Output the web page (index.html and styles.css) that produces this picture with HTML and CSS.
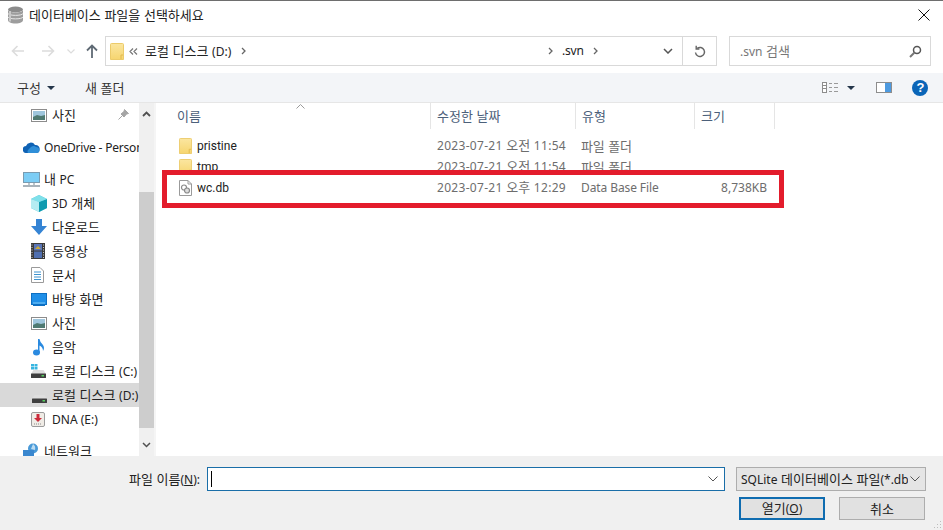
FILE: index.html
```html
<!DOCTYPE html>
<html lang="ko">
<head>
<meta charset="utf-8">
<title>데이터베이스 파일을 선택하세요</title>
<link rel="stylesheet" href="styles.css">
</head>
<body>
<svg class="defs" width="0" height="0" aria-hidden="true">
  <defs>
    <linearGradient id="fg" x1="0" y1="0" x2="0" y2="1"><stop offset="0" stop-color="#fbe6a0"/><stop offset="1" stop-color="#f6d56f"/></linearGradient>
    <symbol id="folder" viewBox="0 0 14 17" preserveAspectRatio="none">
      <path d="M0.500 1.500 Q0.500 0.500 1.500 0.500 H12.500 Q13.500 0.500 13.500 1.500 V16.500 H0.500 Z" fill="url(#fg)" stroke="#eccb6a"/>
      <path d="M11 16 V12 H13" fill="none" stroke="#e2b94e"/>
    </symbol>
    <symbol id="photo" viewBox="0 0 16 13">
      <rect x="0.500" y="0.500" width="15" height="12" fill="#fff" stroke="#8c8c8c"/>
      <rect x="2" y="2" width="12" height="9" fill="#9fc6dd"/>
      <path d="M2 8 L6 6 L10 7 L14 6 V11 H2 Z" fill="#4f7a72"/>
    </symbol>
    <symbol id="drive" viewBox="0 0 15 8">
      <path d="M2.500 0 H12.500 L15 4 H0 Z" fill="#dedede"/>
      <rect x="0" y="3.500" width="15" height="4.500" rx="0.500" fill="#3f3f3f"/>
      <rect x="10.500" y="5" width="2.500" height="1.500" fill="#57d060"/>
    </symbol>
  </defs>
</svg>
<main class="window">
  <header class="titlebar">
    <svg class="title-icon" width="17" height="18" viewBox="0 0 17 18"><ellipse cx="8.500" cy="3.500" rx="7.500" ry="3" fill="#8c8c8c"/><path d="M1 3.500 V14 C1 16 4 17.500 8.500 17.500 S16 16 16 14 V3.500 C16 5.500 13 6.500 8.500 6.500 S1 5.500 1 3.500Z" fill="#9d9d9d"/><path d="M1 7.500 C2 10 15 10 16 7.500 M1 11 C2 13.500 15 13.500 16 11" fill="none" stroke="#e6e6e6"/><path d="M3 5 V15.500" stroke="#c9c9c9" stroke-width="2"/></svg>
    <span class="title-text">데이터베이스 파일을 선택하세요</span>
    <svg class="close" width="12" height="12" viewBox="0 0 12 12"><path d="M0.500 0.500 L11.500 11.500 M11.500 0.500 L0.500 11.500" stroke="#111" stroke-width="1"/></svg>
  </header>

  <nav class="navbar">
    <svg class="nav-icon back" width="14" height="12" viewBox="0 0 14 12"><path d="M13 6 H2 M6.500 1 L1.500 6 L6.500 11" fill="none" stroke="#dcdcdc" stroke-width="1.600"/></svg>
    <svg class="nav-icon forward" width="14" height="12" viewBox="0 0 14 12"><path d="M1 6 H12 M7.500 1 L12.500 6 L7.500 11" fill="none" stroke="#dcdcdc" stroke-width="1.600"/></svg>
    <svg class="nav-icon recent" width="8" height="5" viewBox="0 0 8 5"><path d="M0.500 0.500 L4 4 L7.500 0.500" fill="none" stroke="#dcdcdc" stroke-width="1.200"/></svg>
    <svg class="nav-icon up" width="12" height="14" viewBox="0 0 12 14"><path d="M6 14 V2 M1 6.500 L6 1.500 L11 6.500" fill="none" stroke="#5f6a74" stroke-width="1.800"/></svg>
    <div class="address">
      <svg class="addr-folder" width="14" height="17"><use href="#folder"/></svg>
      <svg class="chev-double" width="9" height="7" viewBox="0 0 9 7"><path d="M4 0.500 L1 3.500 L4 6.500 M8 0.500 L5 3.500 L8 6.500" fill="none" stroke="#777" stroke-width="1.200"/></svg>
      <span class="crumb">로컬 디스크 <span class="lat">(D:)</span></span>
      <svg class="crumb-arrow" width="5" height="8" viewBox="0 0 5 8"><path d="M1 1 L4 4 L1 7" fill="none" stroke="#666" stroke-width="1.300"/></svg>
      <span class="addr-spacer"></span>
      <svg class="crumb-arrow" width="5" height="8" viewBox="0 0 5 8"><path d="M1 1 L4 4 L1 7" fill="none" stroke="#666" stroke-width="1.300"/></svg>
      <span class="crumb svn lat">.svn</span>
      <svg class="crumb-arrow last" width="5" height="8" viewBox="0 0 5 8"><path d="M1 1 L4 4 L1 7" fill="none" stroke="#666" stroke-width="1.300"/></svg>
      <svg class="addr-drop" width="10" height="6" viewBox="0 0 10 6"><path d="M1 1 L5 5 L9 1" fill="none" stroke="#555" stroke-width="1.500"/></svg>
      <span class="refresh">
        <svg width="12" height="13" viewBox="0 0 12 13"><path d="M3.200 3.400 A4.500 4.500 0 1 1 1.500 7.500" fill="none" stroke="#666" stroke-width="1.400"/><path d="M2.200 0.800 V4 H5.400" fill="none" stroke="#666" stroke-width="1.400"/></svg>
      </span>
    </div>
    <div class="search">
      <span class="search-text"><span class="lat">.svn</span> 검색</span>
      <svg width="13" height="13" viewBox="0 0 13 13"><circle cx="8" cy="5" r="3.500" fill="none" stroke="#555" stroke-width="1.500"/><path d="M5.500 7.500 L1 12" stroke="#777" stroke-width="2"/></svg>
    </div>
  </nav>

  <div class="toolbar">
    <span class="tool organize">구성</span>
    <span class="caret"></span>
    <span class="tool newfolder">새 폴더</span>
    <svg class="views" width="16" height="11" viewBox="0 0 16 11"><rect x="0.500" y="0.500" width="4" height="10" fill="#fff" stroke="#8d8d8d"/><path d="M1 3.500 H4 M1 6.500 H4" stroke="#8d8d8d"/><path d="M7 1.500 H10 M12 1.500 H16 M7 5.500 H10 M12 5.500 H16 M7 9.500 H10 M12 9.500 H16" stroke="#9a9a9a"/></svg>
    <span class="caret views-caret"></span>
    <svg class="pane" width="16" height="11" viewBox="0 0 16 11"><rect x="0.500" y="0.500" width="15" height="10" fill="#fff" stroke="#8d8d8d"/><rect x="9" y="1" width="6" height="9" fill="#4d9ae0"/></svg>
    <span class="help">?</span>
  </div>

  <div class="content">
    <aside class="sidebar">
      <div class="tree">
        <div class="tree-row indent first">
          <svg class="ico" width="16" height="13"><use href="#photo"/></svg><span class="label">사진</span>
          <svg class="pin" width="11" height="11" viewBox="0 0 11 11"><path d="M6.500 0.500 L10.500 4.500 L8.500 5 L6 8 L3 5 L6 2.500 Z M4 7 L0.500 10.500" fill="#a5a5a5" stroke="#a5a5a5"/></svg>
        </div>
        <div class="tree-row top-level gap">
          <svg class="ico" width="17" height="11" viewBox="0 0 17 11"><path d="M3.500 11 A3.500 3.500 0 0 1 3 4 A5 5 0 0 1 12 3 A4 4 0 0 1 16.500 8 Q16.500 11 13 11 Z" fill="#0f62b4"/><path d="M8 5 Q11 3 13 5 Q16.500 5 16.500 8.500 Q16 11 13 11 H5 Q3 9 8 5Z" fill="#2f8fd8"/></svg>
          <span class="label lat onedrive">OneDrive - Personal</span>
        </div>
        <div class="tree-row top-level gap">
          <svg class="ico" width="17" height="15" viewBox="0 0 17 15"><rect x="0.500" y="0.500" width="16" height="10" fill="#7ccdf5" stroke="#7a9bb0"/><path d="M6 11 V13 M11 11 V13" stroke="#a8b4bc" stroke-width="1.500"/><path d="M0 14 H17" stroke="#8c9aa3" stroke-width="1.500"/></svg>
          <span class="label">내 <span class="lat">PC</span></span>
        </div>
        <div class="tree-row indent">
          <svg class="ico" width="16" height="17" viewBox="0 0 16 17"><path d="M8 0 L16 4 V13 L8 17 L0 13 V4 Z" fill="#4fc6d6"/><path d="M8 7 L16 4 V13 L8 17 Z" fill="#0f9bb0"/><path d="M8 0 L16 4 L8 7 L0 4 Z" fill="#7fe0ea"/><path d="M0 4 L8 7 V17 L0 13Z" fill="#b5ecf2"/></svg>
          <span class="label"><span class="lat">3D</span> 개체</span>
        </div>
        <div class="tree-row indent">
          <svg class="ico" width="16" height="16" viewBox="0 0 16 16"><path d="M5 0 H11 V7 H16 L8 16 L0 7 H5 Z" fill="#3584d4"/></svg>
          <span class="label">다운로드</span>
        </div>
        <div class="tree-row indent">
          <svg class="ico" width="14" height="16" viewBox="0 0 14 16"><rect width="14" height="16" fill="#3a3a3a"/><rect x="3" y="1" width="8" height="6.500" fill="#5a76b8"/><rect x="3" y="8.500" width="8" height="6.500" fill="#4f6fb0"/><path d="M4 6 L7 3 L10 6" fill="#c9a93a"/><path d="M1 1.500 V15" stroke="#ccc" stroke-dasharray="1 1.500"/><path d="M12.500 1.500 V15" stroke="#ccc" stroke-dasharray="1 1.500"/></svg>
          <span class="label">동영상</span>
        </div>
        <div class="tree-row indent">
          <svg class="ico" width="13" height="16" viewBox="0 0 13 16"><path d="M0.500 0.500 H9 L12.500 4 V15.500 H0.500 Z" fill="#fff" stroke="#9a9a9a"/><path d="M3 5 H10 M3 7.500 H10 M3 10 H10 M3 12.500 H10" stroke="#3e93cf"/></svg>
          <span class="label">문서</span>
        </div>
        <div class="tree-row indent">
          <svg class="ico" width="16" height="13" viewBox="0 0 16 13"><rect x="0.500" y="0.500" width="15" height="11" fill="#1f8fe8" stroke="#0d6fc2"/><path d="M2 10 H14" stroke="#7fcaf7"/><path d="M2 12.500 H14" stroke="#0d6fc2"/></svg>
          <span class="label">바탕 화면</span>
        </div>
        <div class="tree-row indent">
          <svg class="ico" width="16" height="13"><use href="#photo"/></svg><span class="label">사진</span>
        </div>
        <div class="tree-row indent">
          <svg class="ico note" width="12" height="17" viewBox="0 0 12 17"><ellipse cx="3.500" cy="13.500" rx="3.500" ry="3" fill="#2a8ae0"/><path d="M5 13 V0 H6.500 Q7 3.500 10 6 Q12 9 10 12 Q10 8 6.500 6.500 V13 Z" fill="#2a8ae0"/></svg>
          <span class="label">음악</span>
        </div>
        <div class="tree-row indent">
          <svg class="ico" width="15" height="14" viewBox="0 0 15 14"><rect x="0" y="0" width="3" height="2.500" fill="#36b5e0"/><rect x="3.500" y="0" width="3" height="2.500" fill="#36b5e0"/><rect x="0" y="3" width="3" height="2.500" fill="#36b5e0"/><rect x="3.500" y="3" width="3" height="2.500" fill="#36b5e0"/><use href="#drive" x="0" y="6" width="15" height="8"/></svg>
          <span class="label">로컬 디스크 <span class="lat">(C:)</span></span>
        </div>
        <div class="tree-row indent selected">
          <svg class="ico drive-d" width="15" height="8"><use href="#drive"/></svg>
          <span class="label">로컬 디스크 <span class="lat">(D:)</span></span>
        </div>
        <div class="tree-row indent">
          <svg class="ico" width="14" height="15" viewBox="0 0 14 15"><rect x="0.500" y="0.500" width="13" height="14" rx="1.500" fill="#f0ece6" stroke="#9c9c9c"/><path d="M5.500 2 H8.500 V6 H11 L7 10 L3 6 H5.500 Z" fill="#cb2a3a"/><path d="M3 12 H11" stroke="#8a8a8a" stroke-dasharray="1 1"/></svg>
          <span class="label lat">DNA (E:)</span>
        </div>
        <div class="tree-row top-level gap">
          <svg class="ico" width="17" height="16" viewBox="0 0 17 16"><circle cx="10" cy="5.500" r="5" fill="#4a9ad8"/><path d="M10 1 Q13 3 12 7 L8 6 Z" fill="#bcdcf2"/><rect x="0" y="7" width="11" height="9" fill="#3a87cf"/></svg>
          <span class="label">네트워크</span>
        </div>
      </div>
      <div class="scrollbar">
        <svg class="arrow" width="9" height="6" viewBox="0 0 9 6"><path d="M1 5 L4.500 1.500 L8 5" fill="none" stroke="#505050" stroke-width="1.800"/></svg>
        <div class="thumb"></div>
        <svg class="arrow down" width="9" height="6" viewBox="0 0 9 6"><path d="M1 1 L4.500 4.500 L8 1" fill="none" stroke="#505050" stroke-width="1.500"/></svg>
      </div>
    </aside>

    <section class="files">
      <div class="head">
        <span class="col col-name">이름</span>
        <span class="col col-date">수정한 날짜</span>
        <span class="col col-type">유형</span>
        <span class="col col-size">크기</span>
        <svg class="sort" width="9" height="5" viewBox="0 0 9 5"><path d="M0.500 4.500 L4.500 0.500 L8.500 4.500" fill="none" stroke="#9a9a9a"/></svg>
      </div>
      <div class="row">
        <span class="cell-name"><svg width="13" height="16"><use href="#folder"/></svg><span class="name">pristine</span></span>
        <span class="cell date"><span class="lat">2023-07-21</span> 오전 <span class="lat">11:54</span></span>
        <span class="cell type">파일 폴더</span>
        <span class="cell size"></span>
      </div>
      <div class="row">
        <span class="cell-name"><svg width="13" height="16"><use href="#folder"/></svg><span class="name">tmp</span></span>
        <span class="cell date"><span class="lat">2023-07-21</span> 오전 <span class="lat">11:54</span></span>
        <span class="cell type">파일 폴더</span>
        <span class="cell size"></span>
      </div>
      <div class="row">
        <span class="cell-name"><svg width="13" height="16" viewBox="0 0 13 16"><path d="M0.500 0.500 H9 L12.500 4 V15.500 H0.500 Z" fill="#fff" stroke="#9a9a9a"/><path d="M9 0.500 V4 H12.500" fill="none" stroke="#9a9a9a"/><circle cx="5" cy="7.500" r="2.500" fill="none" stroke="#8a8a8a" stroke-width="1.200"/><circle cx="8" cy="10.500" r="2.500" fill="#ddd" stroke="#8a8a8a" stroke-width="1.200"/></svg><span class="name">wc.db</span></span>
        <span class="cell date"><span class="lat">2023-07-21</span> 오후 <span class="lat">12:29</span></span>
        <span class="cell type lat">Data Base File</span>
        <span class="cell size lat">8,738KB</span>
      </div>
    </section>
  </div>

  <footer class="footer">
    <div class="foot-row">
      <label class="file-label">파일 이름<span class="lat">(<u>N</u>):</span></label>
      <div class="name-input">
        <span class="cursor"></span>
        <svg class="input-drop" width="10" height="6" viewBox="0 0 10 6"><path d="M0.500 0.500 L5 5 L9.500 0.500" fill="none" stroke="#555"/></svg>
      </div>
      <div class="filter">
        <span class="filter-text"><span class="lat">SQLite</span> 데이터베이스 파일<span class="lat">(*.db</span></span>
        <svg width="10" height="6" viewBox="0 0 10 6"><path d="M0.500 0.500 L5 5 L9.500 0.500" fill="none" stroke="#555"/></svg>
      </div>
    </div>
    <div class="foot-row buttons">
      <button class="btn primary" type="button">열기<span class="lat">(<u>O</u>)</span></button>
      <button class="btn" type="button">취소</button>
    </div>
    <svg class="grip" width="10" height="10" viewBox="0 0 10 10"><path d="M8 2 h1 v1 h-1z M5 5 h1 v1 h-1z M8 5 h1 v1 h-1z M2 8 h1 v1 h-1z M5 8 h1 v1 h-1z M8 8 h1 v1 h-1z" fill="#bdbdbd"/></svg>
  </footer>

  <div class="highlight"></div>
</main>
</body>
</html>
```
FILE: styles.css
```css
* { box-sizing: border-box; }
html, body { margin: 0; padding: 0; }
body {
  font-family: "Noto Sans CJK KR", "Noto Sans", sans-serif;
  font-size: 13px;
  line-height: 16px;
  color: #222;
  background: #fff;
}
.lat { font-family: "Noto Sans", "Noto Sans CJK KR", sans-serif; font-size: 12px; }
.defs { position: absolute; }
.window {
  position: relative;
  width: 943px;
  height: 530px;
  overflow: hidden;
  display: flex;
  flex-direction: column;
  border-top: 1px solid #6e6e6e;
  background: #fff;
}

/* title */
.titlebar {
  height: 28px;
  display: flex;
  align-items: center;
  padding: 0 12px 0 7px;
  flex: none;
}
.title-text { margin-left: 5px; color: #222; }
.close { margin-left: auto; margin-right: 1px; }

/* nav */
.navbar {
  height: 30px;
  margin-top: 7px;
  display: flex;
  align-items: center;
  flex: none;
  padding-right: 12px;
}
.nav-icon { flex: none; }
.back { margin-left: 11px; }
.forward { margin-left: 16px; }
.recent { margin-left: 12px; }
.up { margin-left: 11px; }
.address {
  margin-left: 7px;
  width: 612px;
  height: 30px;
  border: 1px solid #d9d9d9;
  display: flex;
  align-items: center;
  padding-left: 4px;
}
.addr-folder { flex: none; }
.chev-double { margin-left: 5px; flex: none; }
.crumb { color: #222; margin-left: 7px; white-space: nowrap; }
.crumb-arrow { margin-left: 10px; flex: none; }
.addr-spacer { flex: 1; }
.svn { margin-left: 9px; width: 22px; letter-spacing: -0.2px; }
.crumb-arrow.last { margin-left: 9px; }
.addr-drop { margin-left: 65px; flex: none; }
.refresh {
  margin-left: 9px;
  width: 34px;
  height: 28px;
  border-left: 1px solid #d9d9d9;
  display: flex;
  align-items: center;
  justify-content: center;
  flex: none;
}
.search {
  margin-left: 12px;
  width: 202px;
  height: 30px;
  border: 1px solid #d9d9d9;
  display: flex;
  align-items: center;
  justify-content: space-between;
  padding: 0 8px 0 10px;
}
.search-text { color: #777; }

/* toolbar */
.toolbar {
  height: 30px;
  margin-top: 7px;
  background: #f3f5f8;
  display: flex;
  align-items: center;
  padding-left: 17px;
  flex: none;
  border-bottom: 1px solid #e6e6e6;
}
.tool { color: #333; }
.caret {
  width: 0;
  height: 0;
  border-left: 4px solid transparent;
  border-right: 4px solid transparent;
  border-top: 4px solid #24364a;
  margin-left: 6px;
}
.newfolder { margin-left: 30px; }
.views { margin-left: 698px; flex: none; }
.views-caret { margin-left: 9px; }
.pane { margin-left: 21px; flex: none; }
.help {
  margin-left: 20px;
  width: 16px;
  height: 16px;
  border-radius: 50%;
  background: #0a65b8;
  color: #fff;
  font-weight: 700;
  font-size: 13px;
  line-height: 16px;
  text-align: center;
  font-family: "Liberation Sans", sans-serif;
  flex: none;
}

/* content */
.content { flex: 1; min-height: 0; display: flex; }
.sidebar { width: 156px; display: flex; flex: none; overflow: hidden; border-right: 2px solid #f5f5f5; }
.tree { width: 139px; flex: none; overflow: hidden; }
.tree-row {
  height: 24px;
  display: flex;
  align-items: center;
  position: relative;
  white-space: nowrap;
  overflow: hidden;
}
.tree-row.gap { margin-top: 8px; }
.tree-row.indent { padding-left: 31px; }
.tree-row.top-level { padding-left: 23px; }
.tree-row .ico { flex: none; }
.tree-row .label { position: absolute; left: 52px; color: #222; }
.tree-row.top-level .label { left: 44px; }
.tree-row .label.lat { margin-top: 2px; }
.tree-row .onedrive { letter-spacing: -0.2px; }
.tree-row.selected { background: #d9d9d9; }
.ico.note { margin-left: 2px; }
.ico.drive-d { margin-left: 1px; margin-top: 7px; }
.pin { position: absolute; right: 10px; top: 6px; }
.scrollbar {
  width: 15px;
  flex: none;
  background: #f0f0f0;
  display: flex;
  flex-direction: column;
  align-items: center;
}
.arrow { flex: none; margin-top: 8px; }
.thumb { width: 15px; height: 236px; margin-top: 75px; background: #cdcdcd; flex: none; }
.arrow.down { margin-top: 14px; }

/* files */
.files { flex: 1; min-width: 0; }
.head {
  height: 26px;
  display: grid;
  grid-template-columns: 275px 145px 119px 80px;
  position: relative;
  margin-bottom: 6px;
}
.col {
  display: flex;
  align-items: center;
  padding-left: 6px;
  color: #4c607a;
  border-right: 1px solid #e5e5e5;
}
.col-name { padding-left: 21px; }
.sort { position: absolute; left: 140px; top: 1px; }
.row {
  height: 21px;
  display: grid;
  grid-template-columns: 275px 145px 119px 80px;
  align-items: center;
}
.cell-name { display: flex; align-items: center; padding-left: 23px; gap: 5px; height: 21px; }
.cell-name svg { flex: none; }
.name { color: #222; font-family: "Roboto", sans-serif; font-size: 12px; }
.cell { color: #6d6d6d; padding-left: 6px; white-space: nowrap; }
.cell.type { padding-left: 5px; letter-spacing: -0.1px; }
.date .lat { letter-spacing: 0.3px; }
.size { text-align: right; padding-right: 8px; }

/* footer */
.footer {
  height: 74px;
  flex: none;
  background: #f0f0f0;
  position: relative;
  padding-top: 11px;
  z-index: 1;
}
.foot-row { display: flex; align-items: center; height: 24px; }
.file-label { margin-left: 129px; width: 78px; color: #222; white-space: nowrap; }
.name-input {
  width: 518px;
  height: 24px;
  background: #fff;
  border: 1px solid #1a6ea8;
  display: flex;
  align-items: center;
  justify-content: space-between;
  padding: 0 6px 0 3px;
}
.cursor { width: 1px; height: 16px; background: #000; }
.filter {
  margin-left: 11px;
  width: 190px;
  height: 24px;
  background: #e5e5e5;
  border: 1px solid #adadad;
  display: flex;
  align-items: center;
  justify-content: space-between;
  padding: 0 5px 0 4px;
  white-space: nowrap;
  overflow: hidden;
}
.filter-text { color: #222; overflow: hidden; width: 167px; }
.buttons { margin-top: 6px; height: 23px; padding-left: 739px; gap: 14px; }
.btn {
  width: 86px;
  height: 23px;
  padding: 0;
  background: #e1e1e1;
  border: 1px solid #adadad;
  border-radius: 0;
  color: #222;
  font: inherit;
}
.btn.primary { border: 2px solid #0f6cb0; }
.grip { position: absolute; right: 1px; bottom: 1px; }

/* annotation */
.highlight {
  position: absolute;
  left: 162px;
  top: 169px;
  width: 622px;
  height: 38px;
  border: 5px solid #e31c2c;
}
```
